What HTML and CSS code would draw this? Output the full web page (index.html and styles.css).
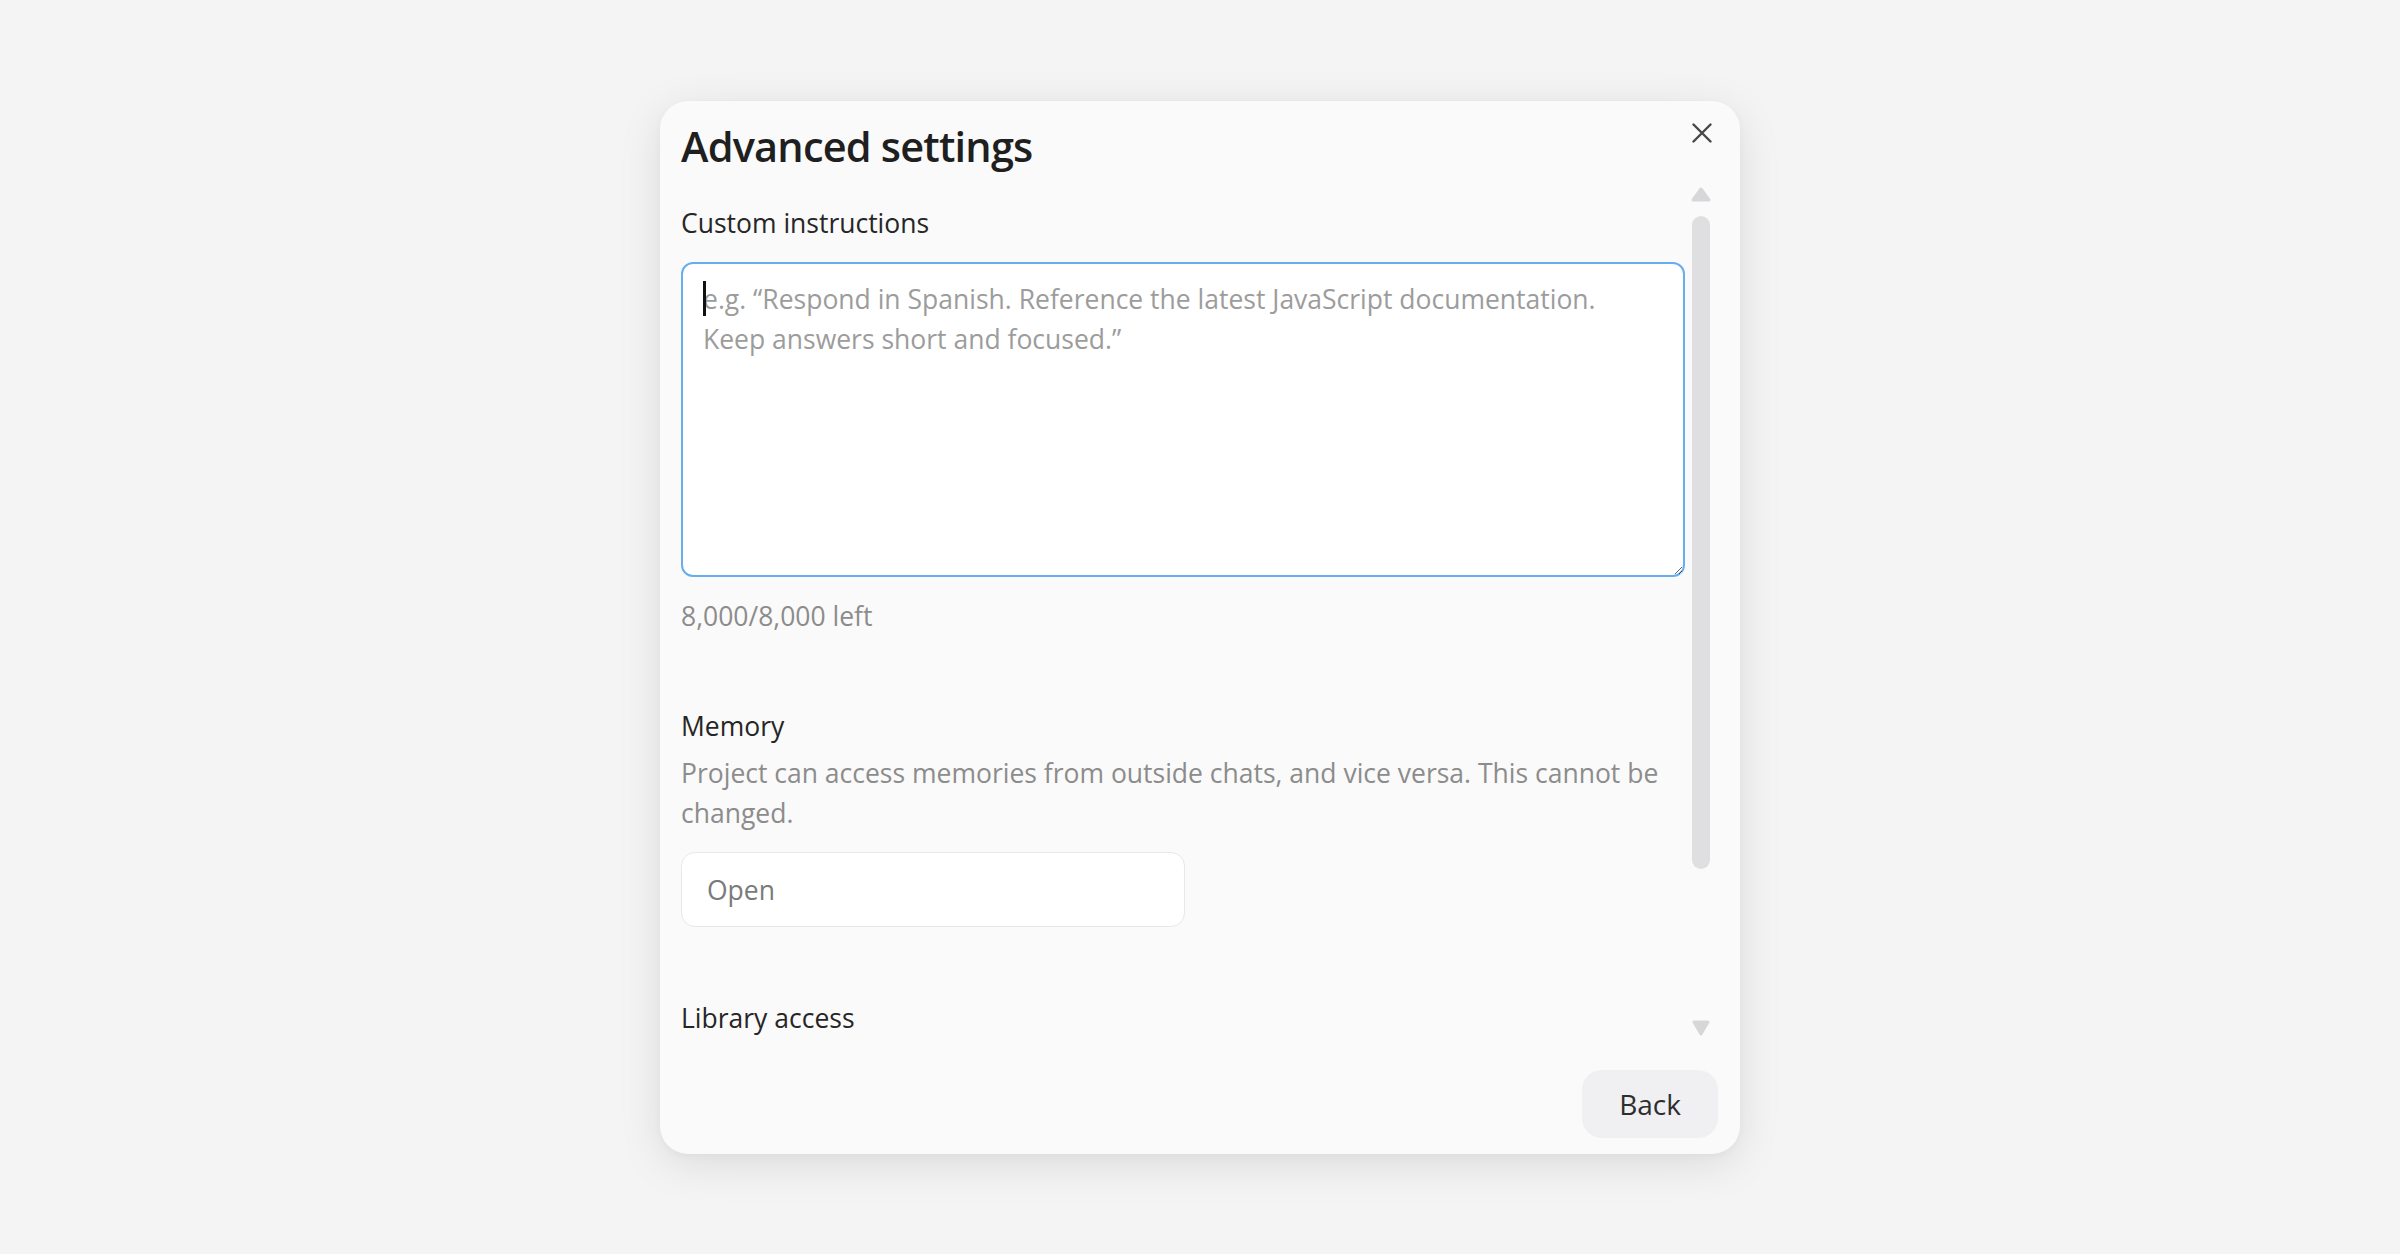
FILE: index.html
```html
<!DOCTYPE html>
<html lang="en">
<head>
<meta charset="utf-8">
<title>Advanced settings</title>
<link rel="stylesheet" href="styles.css">
</head>
<body>
<div class="page">
  <div class="dialog">
    <div class="header">
      <h1 class="title">Advanced settings</h1>
      <button class="close" aria-label="Close">
        <svg width="20" height="20" viewBox="0 0 20 20"><path d="M1.5 1.5 L18.5 18.5 M18.5 1.5 L1.5 18.5" stroke="#474747" stroke-width="2.4" stroke-linecap="round" fill="none"/></svg>
      </button>
    </div>
    <div class="body">
      <div class="content">
        <section class="section">
          <div class="label">Custom instructions</div>
          <div class="field">
            <textarea class="ta" placeholder="e.g. “Respond in Spanish. Reference the latest JavaScript documentation.&#10;Keep answers short and focused.”"></textarea>
            <span class="caret"></span>
          </div>
          <div class="count">8,000/8,000 left</div>
        </section>
        <section class="section memory">
          <div class="label">Memory</div>
          <p class="desc">Project can access memories from outside chats, and vice versa. This cannot be<br>changed.</p>
          <div class="select">Open</div>
        </section>
        <section class="section library">
          <div class="label">Library access</div>
        </section>
      </div>
      <div class="scrollbar">
        <svg class="arrow-up" width="20" height="15" viewBox="0 0 20 15"><polygon points="10,2 18,13 2,13" fill="#d7d7d9" stroke="#d7d7d9" stroke-width="3" stroke-linejoin="round"/></svg>
        <div class="thumb"></div>
        <div class="spacer"></div>
        <svg class="arrow-down" width="18" height="16" viewBox="0 0 18 16"><polygon points="2,2 16,2 9,14" fill="#d7d7d9" stroke="#d7d7d9" stroke-width="3" stroke-linejoin="round"/></svg>
      </div>
    </div>
    <div class="footer">
      <button class="back">Back</button>
    </div>
  </div>
</div>
</body>
</html>
```
FILE: styles.css
```css
html, body {
  margin: 0;
  padding: 0;
}
body {
  background: #f4f4f4;
  font-family: "Open Sans", "Noto Sans", sans-serif;
  color: #262626;
}
.page {
  height: 1254px;
  display: flex;
  align-items: center;
  justify-content: center;
}
.dialog {
  width: 1080px;
  height: 1053px;
  box-sizing: border-box;
  background: #fafafa;
  border-radius: 28px;
  box-shadow: 0 10px 44px rgba(0, 0, 0, 0.10), 0 2px 8px rgba(0, 0, 0, 0.03);
  display: flex;
  flex-direction: column;
  overflow: hidden;
}
.header {
  height: 80px;
  box-sizing: border-box;
  display: flex;
  justify-content: space-between;
  align-items: flex-start;
  padding: 12px 18px 0 21px;
}
.title {
  margin: 5px 0 0 0;
  font-size: 41.5px;
  line-height: 56px;
  font-weight: 600;
  color: #1f1f1f;
  letter-spacing: -0.8px;
}
.close {
  width: 40px;
  height: 40px;
  padding: 0;
  border: none;
  background: transparent;
  display: flex;
  align-items: center;
  justify-content: center;
}
.body {
  flex: 1;
  min-height: 0;
  display: flex;
  gap: 6px;
  padding: 0 29px 0 21px;
}
.content {
  flex: 1;
  min-width: 0;
  overflow: hidden;
  padding-top: 24px;
}
.label {
  font-size: 26.5px;
  line-height: 36px;
  color: #262626;
}
.field {
  position: relative;
  margin-top: 21px;
}
.ta {
  display: block;
  width: 100%;
  height: 315px;
  box-sizing: border-box;
  margin: 0;
  border: 2px solid #68aeef;
  border-radius: 12px;
  padding: 15px 20px;
  background: #ffffff;
  font-family: inherit;
  font-size: 26.5px;
  line-height: 40px;
  color: #262626;
  outline: none;
  caret-color: transparent;
}
.ta::placeholder {
  color: #9c9c9c;
  opacity: 1;
}
.caret {
  position: absolute;
  left: 22px;
  top: 19px;
  width: 2.5px;
  height: 35px;
  background: #111;
}
.count {
  margin-top: 21px;
  font-size: 26.5px;
  line-height: 36px;
  color: #8c8c8c;
}
.memory {
  margin-top: 74px;
}
.desc {
  margin: 9.5px 0 0 0;
  font-size: 26.5px;
  line-height: 40px;
  color: #8c8c8c;
}
.select {
  margin-top: 19px;
  width: 504px;
  height: 75px;
  box-sizing: border-box;
  border: 1.5px solid #e8e8e8;
  border-radius: 14px;
  background: #ffffff;
  padding-left: 25px;
  display: flex;
  align-items: center;
  font-size: 26.5px;
  color: #7a7a7a;
}
.library {
  margin-top: 72.5px;
}
.scrollbar {
  width: 20px;
  display: flex;
  flex-direction: column;
  align-items: center;
}
.arrow-up {
  margin-top: 6px;
  flex: none;
}
.thumb {
  margin-top: 14px;
  width: 18px;
  height: 653px;
  border-radius: 9px;
  background: #dfdfe1;
  flex: none;
}
.spacer {
  flex: 1;
}
.arrow-down {
  margin-bottom: 10px;
  flex: none;
}
.footer {
  height: 108px;
  box-sizing: border-box;
  display: flex;
  justify-content: flex-end;
  padding: 24px 22px 16px 0;
}
.back {
  height: 68px;
  padding: 0 37px;
  border: none;
  border-radius: 20px;
  background: #f0f0f2;
  font-family: inherit;
  font-size: 28px;
  color: #2e2e2e;
}
```
